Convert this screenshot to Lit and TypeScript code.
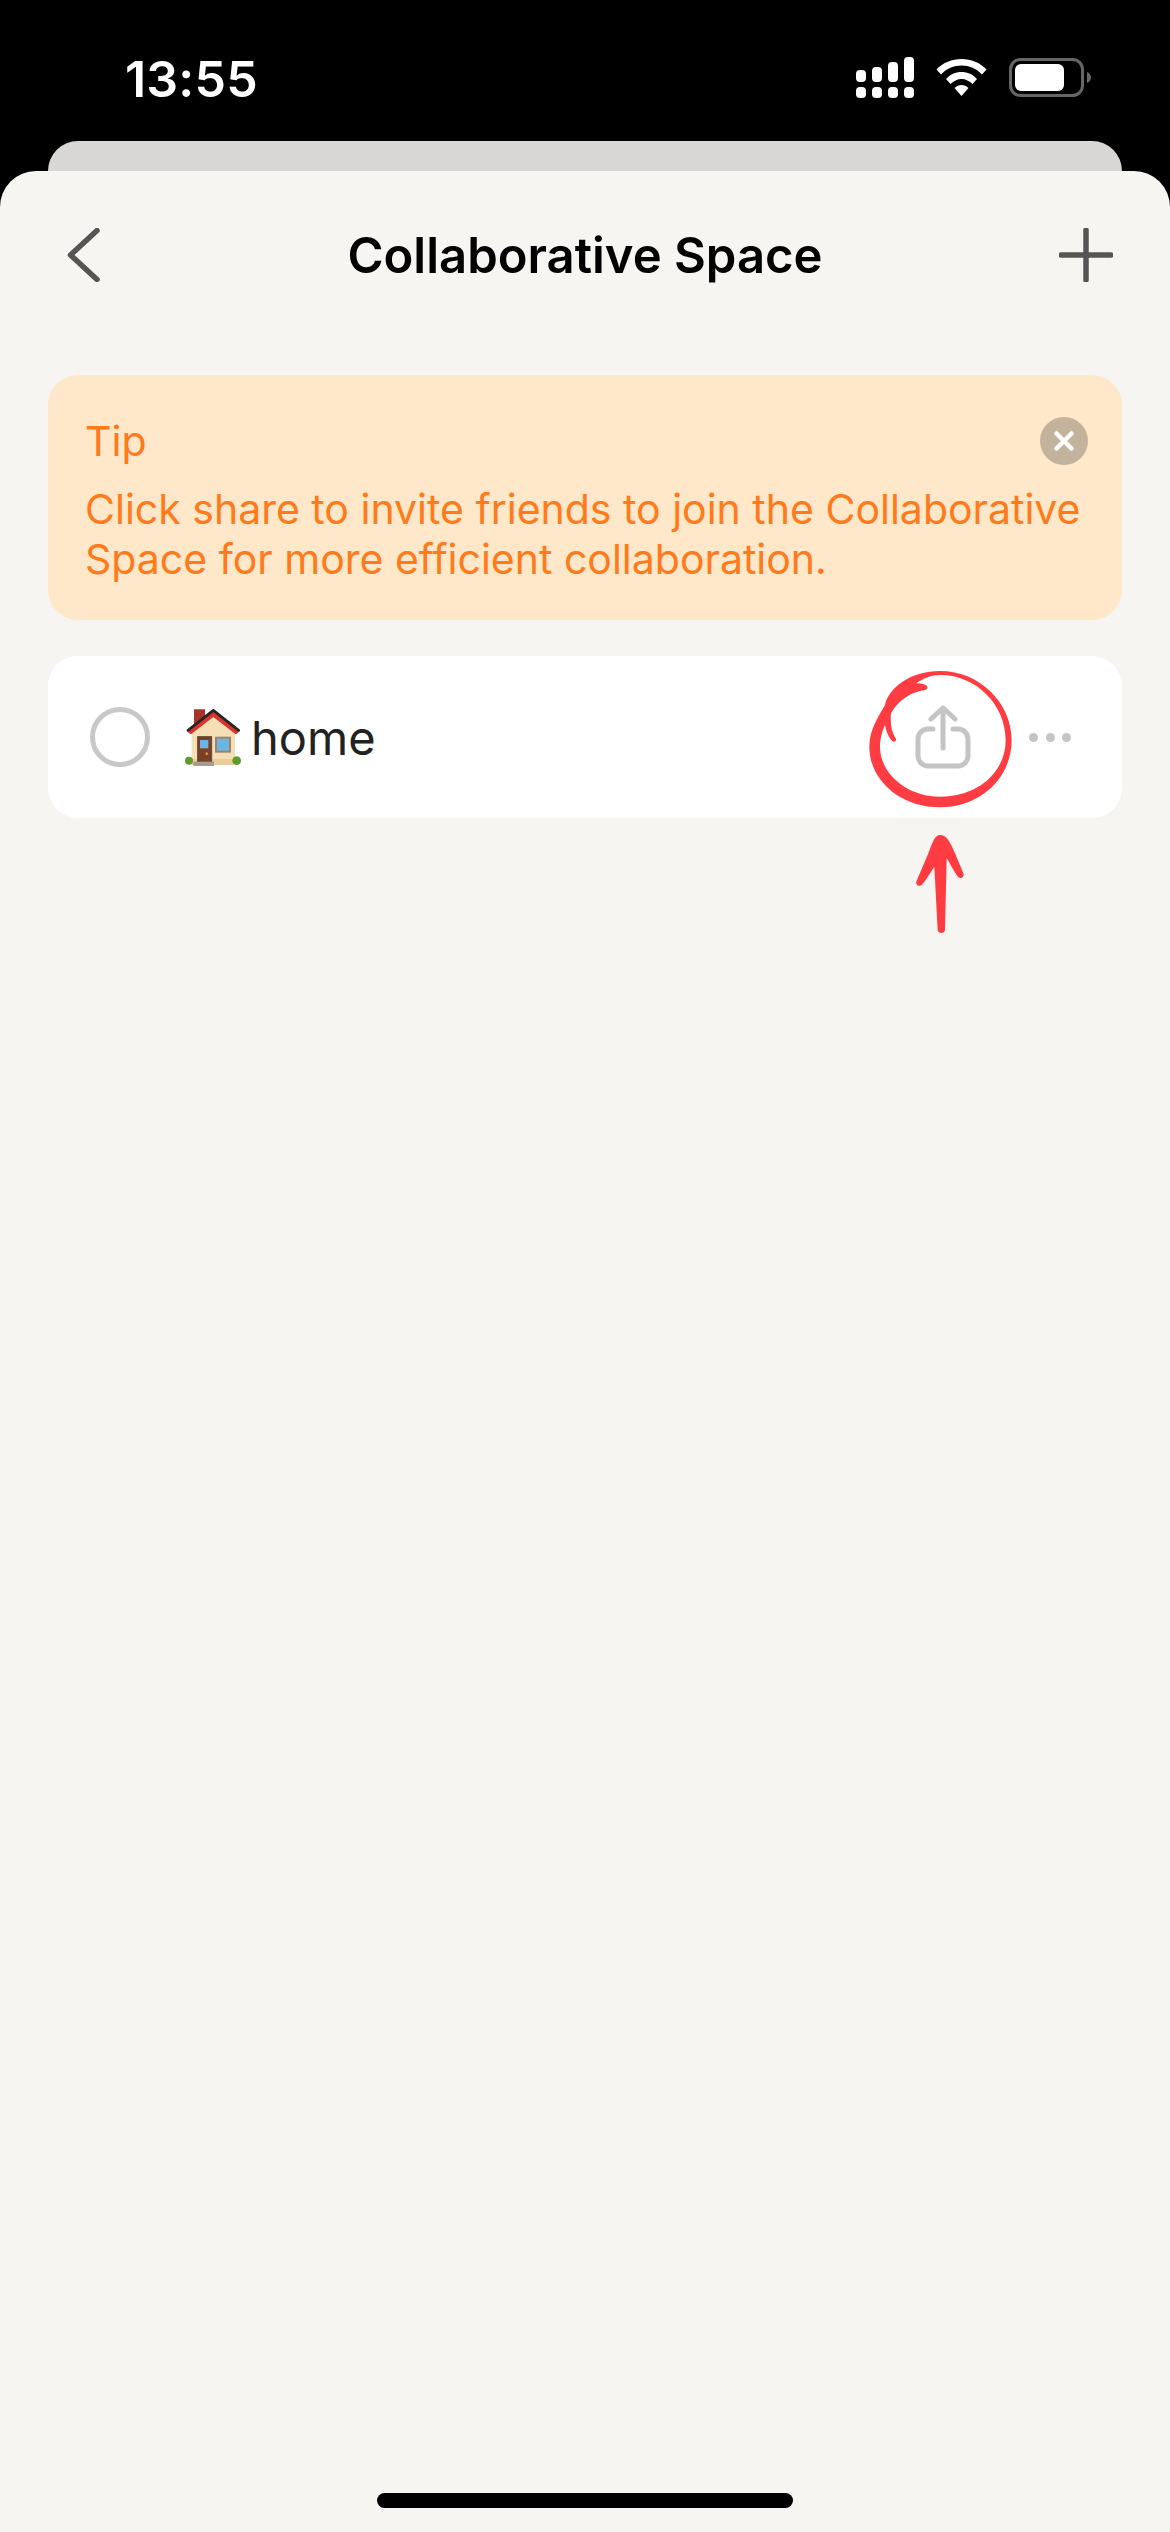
import { LitElement, css, html, svg } from 'lit';
import { customElement } from 'lit/decorators.js';

const signal = svg`
  <rect x="0" y="13" width="10" height="12" rx="4" />
  <rect x="16" y="10" width="10" height="15" rx="4" />
  <rect x="32" y="5" width="10" height="20" rx="4" />
  <rect x="48" y="0" width="10" height="25" rx="4" />
  <rect x="0" y="30" width="10" height="11" rx="4" />
  <rect x="16" y="30" width="10" height="11" rx="4" />
  <rect x="32" y="30" width="10" height="11" rx="4" />
  <rect x="48" y="30" width="10" height="11" rx="4" />
`;

const wifi = svg`
  <path d="M.5 10.5C7 3.5 16 0 25.5 0S44 3.5 50.5 10.5L46 15.5C40.5 9.5 33 6.5 25.5 6.5S10.5 9.5 5 15.5Z" />
  <path d="M10 20C14 15.5 19.5 13 25.5 13S37 15.5 41 20L36.5 25C33.5 22 29.5 20 25.5 20S17.5 22 14.5 25Z" />
  <path d="M18.5 29C20.5 27.3 23 26 25.5 26S30.5 27.3 32.5 29L25.5 37Z" />
`;

// the house emoji, drawn since no emoji font is installed
const house = svg`
  <path d="M27 48V1h33v30z" fill="#a8352b" />
  <path d="M20 72 85 20l65 52v96H20z" fill="#f6dfb4" />
  <path d="M20 150h130v18H20z" fill="#e8cd9c" />
  <path d="M10 63 85 4l75 59v8l-8 5-67-52-67 52-8-5z" fill="#d9342e" />
  <path d="M9 64 85 4l76 60" fill="none" stroke="#2a2322" stroke-width="8" stroke-linejoin="round" stroke-linecap="round" />
  <rect x="38" y="83" width="42" height="76" fill="#7b3f24" stroke="#5e4a38" stroke-width="3" />
  <rect x="45" y="93" width="25" height="25" fill="#6db4e6" />
  <circle cx="65" cy="134" r="3.500" fill="#f2b632" />
  <rect x="93" y="86" width="42" height="42" fill="#6db4e6" stroke="#9c8468" stroke-width="6" />
  <rect x="25" y="158" width="62" height="13" fill="#a59c90" />
  <circle cx="12" cy="155" r="12" fill="#5f9c2f" />
  <circle cx="155" cy="155" r="13" fill="#5f9c2f" />
`;

@customElement('app-root')
export class AppRoot extends LitElement {
  static styles = css`
:host {
  display: block;
  position: relative;
  width: 1170px;
  height: 2532px;
  background: #000;
  overflow: hidden;
  font-family: Inter, "Liberation Sans", sans-serif;
}
.page {
  display: flex;
  flex-direction: column;
  height: 100%;
}
.status {
  display: flex;
  align-items: center;
  height: 141px;
  padding: 0 79px 0 125px;
  box-sizing: border-box;
  flex: none;
}
.time {
  color: #fff;
  font-size: 50px;
  font-weight: 600;
  letter-spacing: 0.2px;
  line-height: 58px;
  margin-right: auto;
  margin-top: 16px;
}
.status-icons {
  display: flex;
  align-items: center;
  gap: 22px;
  margin-top: 14px;
  fill: #fff;
}
.status-icons svg {
  display: block;
}
.behind {
  flex: none;
  height: 30px;
  margin: 0 48px;
  background: #d8d7d5;
  border-radius: 30px 30px 0 0;
}
.sheet {
  flex: 1;
  display: flex;
  flex-direction: column;
  background: #f6f5f1;
  border-radius: 36px 36px 0 0;
}
.header {
  flex: none;
  display: grid;
  grid-template-columns: 1fr auto 1fr;
  align-items: center;
  height: 168px;
  padding: 0 57px;
}
.header svg {
  display: block;
  fill: none;
  stroke: #555;
  stroke-width: 5.5;
  stroke-linecap: round;
  stroke-linejoin: round;
}
.back {
  margin-left: 10px;
}
.plus {
  justify-self: end;
}
.title {
  font-size: 49px;
  font-weight: 600;
  color: #000;
}
.content {
  display: flex;
  flex-direction: column;
  gap: 36px;
  padding: 36px 48px 0;
}
.tip {
  background: #ffe8c9;
  border-radius: 30px;
  height: 245px;
  box-sizing: border-box;
  padding: 40px 34px 0 37px;
  color: #ff7a1a;
  font-size: 41px;
  line-height: 50px;
}
.tip-head {
  display: flex;
  align-items: center;
  justify-content: space-between;
  height: 52px;
  margin-bottom: 17px;
}
.close {
  display: block;
  width: 48px;
  height: 48px;
}
.row {
  display: flex;
  align-items: center;
  height: 162px;
  background: #fff;
  border-radius: 30px;
  padding: 0 51px 0 42px;
}
.radio {
  width: 60px;
  height: 60px;
  box-sizing: border-box;
  border: 5px solid #c8c8c8;
  border-radius: 50%;
  margin-right: 35px;
}
.house {
  display: block;
  width: 56px;
  height: 57px;
  margin-right: 10px;
}
.name {
  font-size: 47px;
  color: #222;
  margin-right: auto;
}
.share {
  display: block;
  fill: none;
  stroke: #c4c4c4;
  stroke-width: 5;
  stroke-linecap: round;
  stroke-linejoin: round;
  margin-right: 58px;
}
.more {
  display: flex;
  gap: 7.5px;
}
.more span {
  width: 9px;
  height: 9px;
  border-radius: 50%;
  background: #c4c4c4;
}
.home-bar {
  flex: none;
  width: 416px;
  height: 15px;
  margin: auto auto 24px;
  background: #000;
  border-radius: 8px;
}
.mark {
  position: absolute;
  left: 840px;
  top: 650px;
  fill: #ff3c41;
}
`;

  render() {
    return html`
<div class="page">
  <div class="status">
    <div class="time">13:55</div>
    <div class="status-icons">
      <svg width="58" height="41" viewBox="0 0 58 41">${signal}</svg>
      <svg width="51" height="37" viewBox="0 0 51 37">${wifi}</svg>
      <svg width="82" height="39" viewBox="0 0 82 39">
        <rect x="1.5" y="1.5" width="72" height="36" rx="10" fill="none" stroke="#666" stroke-width="3" />
        <rect x="6" y="6" width="49" height="27" rx="6" fill="#fff" />
        <path d="M78 14c2.500 1 4 3 4 5.500s-1.500 4.500-4 5.500z" fill="#666" />
      </svg>
    </div>
  </div>
  <div class="behind"></div>
  <div class="sheet">
    <div class="header">
      <svg class="back" width="36" height="54" viewBox="0 0 36 54">
        <path d="M30 2.500 3.500 27 30 51.500" />
      </svg>
      <div class="title">Collaborative Space</div>
      <svg class="plus" width="54" height="54" viewBox="0 0 54 54">
        <path d="M27 2v50M2 27h50" />
      </svg>
    </div>
    <div class="content">
      <div class="tip">
        <div class="tip-head">
          <span>Tip</span>
          <svg class="close" viewBox="0 0 48 48">
            <circle cx="24" cy="24" r="24" fill="#c4b39c" />
            <path d="M16.500 16.500 31.500 31.500M31.500 16.500 16.500 31.500" fill="none" stroke="#fff" stroke-width="4.500" stroke-linecap="round" />
          </svg>
        </div>
        <div>Click share to invite friends to join the Collaborative Space for more efficient collaboration.</div>
      </div>
      <div class="row">
        <div class="radio"></div>
        <svg class="house" viewBox="0 0 168 171">${house}</svg>
        <div class="name">home</div>
        <svg class="share" width="56" height="64" viewBox="0 0 56 64">
          <path d="M28 43V3M16 14 28 3l12 11" />
          <path d="M18 24h-5a10 10 0 0 0-10 10v17a10 10 0 0 0 10 10h30a10 10 0 0 0 10-10V34a10 10 0 0 0-10-10h-5" />
        </svg>
        <div class="more"><span></span><span></span><span></span></div>
      </div>
    </div>
    <div class="home-bar"></div>
  </div>
</div>
<svg class="mark" width="280" height="300" viewBox="0 0 840 900">
  <path fill-rule="evenodd" d="M300 63C420 63 515 160 515 270C515 385 420 472 300 472C180 472 88 390 88 290C88 240 115 200 135 165C145 115 210 63 300 63ZM300 75C275 75 250 85 228 100C235 100 245 100 255 104C265 108 265 118 255 120C215 125 175 150 153 190C150 220 155 245 165 262C170 268 170 275 160 275C150 270 140 250 135 225C128 240 120 265 120 290C120 370 200 440 300 440C410 440 497 370 497 270C497 165 410 75 300 75Z" />
  <path d="M300 555C320 555 330 575 345 610L371 672C373 682 362 687 355 682C345 670 330 640 320 625L315 840C313 852 295 852 293 840L283 650C270 670 255 695 245 705C235 712 225 702 230 692L265 610C278 575 285 555 300 555Z" />
</svg>
`;
  }
}
